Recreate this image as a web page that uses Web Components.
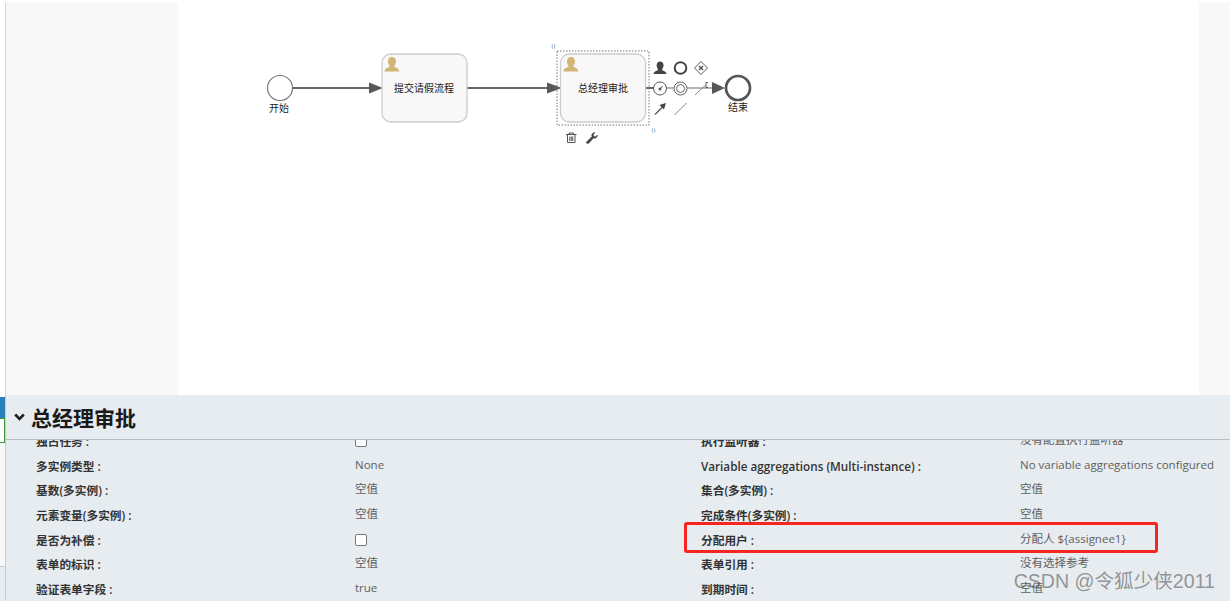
<!DOCTYPE html>
<html>
<head>
<meta charset="utf-8">
<style>
	html, body { margin: 0; height: 100%; background: #fff; overflow: hidden; }
	body { font-family: 'Open Sans', 'Noto Sans CJK SC', sans-serif; }
</style>
</head>
<body>
<modeler-page>
	<bpmn-canvas slot="canvas"></bpmn-canvas>
	<props-panel slot="panel" heading="总经理审批">
		<prop-row slot="left" label="独占任务 :" type="check"></prop-row>
		<prop-row slot="left" label="多实例类型 :" value="None"></prop-row>
		<prop-row slot="left" label="基数(多实例) :" value="空值"></prop-row>
		<prop-row slot="left" label="元素变量(多实例) :" value="空值"></prop-row>
		<prop-row slot="left" label="是否为补偿 :" type="check"></prop-row>
		<prop-row slot="left" label="表单的标识 :" value="空值"></prop-row>
		<prop-row slot="left" label="验证表单字段 :" value="true"></prop-row>
		<prop-row slot="right" label="执行监听器 :" value="没有配置执行监听器"></prop-row>
		<prop-row slot="right" label="Variable aggregations (Multi-instance) :" value="No variable aggregations configured"></prop-row>
		<prop-row slot="right" label="集合(多实例) :" value="空值"></prop-row>
		<prop-row slot="right" label="完成条件(多实例) :" value="空值"></prop-row>
		<prop-row slot="right" label="分配用户 :" value="分配人 ${assignee1}"></prop-row>
		<prop-row slot="right" label="表单引用 :" value="没有选择参考"></prop-row>
		<prop-row slot="right" label="到期时间 :" value="空值"></prop-row>
	</props-panel>
</modeler-page>
<script>
class ModelerPage extends HTMLElement {
	constructor() {
		super()
		this.attachShadow({ mode: 'open' }).innerHTML = `<style>
			:host { display: flex; flex-direction: column; height: 601px; position: relative; overflow: hidden; }
			.top { height: 395px; padding-top: 2px; box-sizing: border-box; display: flex; flex: none; }
			.rail { width: 6px; border-right: 1px solid #d9d9d9; box-sizing: border-box; flex: none; }
			.palette { width: 172px; background: #f8f8f8; flex: none; }
			.work { width: 1021px; flex: none; position: relative; }
			.side { flex: 1; background: #f8f8f8; }
			.bottom { flex: 1; min-height: 0; display: flex; }
			.edge { width: 5px; flex: none; display: flex; flex-direction: column; padding-top: 2px; box-sizing: border-box; }
			.edge i { display: block; box-sizing: border-box; }
			.blue { height: 21px; background: #2b7fb8; }
			.green { height: 25px; border: 1px solid #3a9a3a; border-left: 0; background: #fff; }
			.white { height: 123px; background: #f8f8f8; }
			.grey { flex: 1; border-top: 1px solid #c6cade; background: #e7ecf0; }
			.panel { flex: 1; min-width: 0; border-left: 1px solid #c8ccd0; }
			.mark { position: absolute; right: 15px; bottom: 8px; font: 19.600px/24px 'Liberation Sans', 'Noto Sans CJK SC', sans-serif; color: rgba(90, 90, 90, .62); }
			.box { position: absolute; left: 684px; top: 522px; width: 468px; height: 25px; border: 3px solid #f5261e; border-radius: 3px; }
		</style>
		<div class="top">
			<div class="rail"></div>
			<div class="palette"></div>
			<div class="work"><slot name="canvas"></slot></div>
			<div class="side"></div>
		</div>
		<div class="bottom">
			<div class="edge"><i class="blue"></i><i class="green"></i><i class="white"></i><i class="grey"></i></div>
			<div class="panel"><slot name="panel"></slot></div>
		</div>
		<div class="box"></div>
		<div class="mark">CSDN @令狐少侠2011</div>`
	}
}

class BpmnCanvas extends HTMLElement {
	constructor() {
		super()
		// canvas origin sits at x=178, y=2 of the page
		const user = (x, y, c, s = 1) => `<path transform="translate(${x} ${y}) scale(${s})" fill="${c}" d="M7 0c2.6 0 4 2 4 4.4 0 1.8-.7 3.2-1.6 4.1v1.6c2 .6 4.6 1.4 5 4.4H-.6c.4-3 3-3.8 5-4.4V8.500C3.700 7.600 3 6.200 3 4.400 3 2 4.400 0 7 0z"/>`
		this.attachShadow({ mode: 'open' }).innerHTML = `<style>
			:host { display: block; width: 100%; height: 100%; }
			svg { display: block; }
			text { font-family: 'Noto Sans CJK SC', sans-serif; font-size: 10px; fill: #222; text-anchor: middle; }
		</style>
		<svg width="1021" height="393" viewBox="178 2 1021 393">
			<g fill="none" stroke="#666" stroke-width="2">
				<path d="M293 88H372"/>
				<path d="M467 88H551"/>
				<path d="M646 88H654"/>
				<path d="M654 88H714" stroke="#b4b4b4"/>
			</g>
			<path d="M369 82.500L383 88L369 93.500z" fill="#585858"/>
			<path d="M547 82.500L562 88L547 93.500z" fill="#585858"/>
			<path d="M712 82L725 88L712 94z" fill="#585858"/>

			<circle cx="280" cy="88" r="12.500" fill="#fff" stroke="#777" stroke-width="1.200"/>
			<text x="279" y="112">开始</text>

			<rect x="382" y="54" width="85" height="68" rx="9" fill="#f8f8f8" stroke="#ccc" stroke-width="1.300"/>
			${user(385, 57, '#d1b574')}
			<text x="424" y="92">提交请假流程</text>

			<rect x="557" y="51" width="92" height="74" fill="none" stroke="#777" stroke-width="1" stroke-dasharray="1.500 1.500"/>
			<rect x="560.500" y="54" width="85" height="68" rx="9" fill="#f8f8f8" stroke="#ccc" stroke-width="1.300"/>
			${user(564, 57, '#d1b574')}
			<text x="603" y="92">总经理审批</text>
			<rect x="552" y="45" width="3" height="3" fill="none" stroke="#6f8fc0" stroke-width="1" stroke-dasharray="1 1"/>
			<rect x="652" y="129" width="3" height="3" fill="none" stroke="#6f8fc0" stroke-width="1" stroke-dasharray="1 1"/>

			<circle cx="738" cy="88" r="12" fill="#fff" stroke="#555" stroke-width="2.700"/>
			<text x="738" y="111">结束</text>

			${user(654, 61.500, '#444', .87)}
			<circle cx="680.500" cy="68" r="5.800" fill="none" stroke="#444" stroke-width="2"/>
			<path d="M701 61.500l6.500 6.500-6.500 6.500-6.500-6.500z" fill="#fff" stroke="#555" stroke-width="1"/>
			<path d="M699 66l4 4M703 66l-4 4" stroke="#555" stroke-width="1.500"/>

			<circle cx="660" cy="88.500" r="6.500" fill="#fff" stroke="#555" stroke-width="1"/>
			<circle cx="660" cy="89" r="1.500" fill="#555"/>
			<path d="M660 89l2.800-3" fill="none" stroke="#555" stroke-width="1"/>
			<circle cx="680.500" cy="88.500" r="6.500" fill="#fff" stroke="#666" stroke-width="1"/>
			<circle cx="680.500" cy="88.500" r="4" fill="none" stroke="#666" stroke-width="1"/>
			<path d="M695 95l10-9.500" stroke="#888" stroke-width="1"/>
			<path d="M708 82.500h-2v5h2" fill="none" stroke="#555" stroke-width="1"/>

			<path d="M655 114.500l9-9" stroke="#555" stroke-width="1.200"/>
			<path d="M666 103l-2 6.500-4.500-4.500z" fill="#444"/>
			<path d="M674.500 115l12-12" stroke="#888" stroke-width="1"/>

			<g fill="none" stroke="#555" stroke-width="1">
				<path d="M566 134.500h10.500M569 134.500v-1.500h4.500v1.500"/>
				<path d="M567.500 135v7.500h7.500V135M569.800 136.500v4.500M571.300 136.500v4.500M572.800 136.500v4.500"/>
			</g>
			<path d="M586 142.500l1.500-1.500 4.500-4.500c-.8-2 .6-4 3-3.900l-1.800 1.800.6 1.800 1.800.6 1.800-1.800c.2 2.400-1.800 3.800-3.900 3l-4.700 5.200-1.300.4z" fill="#444" stroke="#444" stroke-width=".5"/>
		</svg>`
	}
}

class PropsPanel extends HTMLElement {
	constructor() {
		super()
		this.attachShadow({ mode: 'open' }).innerHTML = `<style>
			:host { display: block; height: 206px; background: #e7ecf0; overflow: hidden; color: #222; }
			h2 { margin: 0; height: 45px; box-sizing: border-box; border-bottom: 1px solid #b9bec4; display: flex; align-items: center; gap: 6px; padding: 0 0 0 8px; font: 700 21px/44px 'Noto Sans CJK SC', sans-serif; color: #1a1a1a; }
			svg { flex: none; }
			.clip { height: 160px; overflow: hidden; }
			.cols { display: grid; grid-template-columns: 665px 1fr; margin-top: -11px; }
			.col { display: flex; flex-direction: column; }
		</style>
		<h2><svg width="11" height="8" viewBox="0 0 11 8"><path d="M1.200 1.500l4.300 4.300 4.300-4.300" fill="none" stroke="#1f1f1f" stroke-width="2.600"/></svg><span></span></h2>
		<div class="clip"><div class="cols">
			<div class="col"><slot name="left"></slot></div>
			<div class="col"><slot name="right"></slot></div>
		</div></div>`
		this.shadowRoot.querySelector('span').textContent = this.getAttribute('heading')
	}
}

class PropRow extends HTMLElement {
	constructor() {
		super()
		this.attachShadow({ mode: 'open' }).innerHTML = `<style>
			:host { display: flex; height: 24.660px; font-size: 11.500px; padding-left: 30px; line-height: 24.660px; }
			.l { width: 319px; flex: none; font-weight: 600; font-size: 11.700px; color: #333; white-space: nowrap; box-sizing: border-box; }
			.v { color: #5f5f5f; white-space: nowrap; position: relative; top: -1px; }
			.c { width: 10px; height: 10px; border: 1px solid #767676; border-radius: 2px; background: #fff; margin-top: 6px; }
		</style><div class="l"></div>`
		const root = this.shadowRoot
		root.querySelector('.l').textContent = this.getAttribute('label')
		if (this.getAttribute('type') === 'check') {
			const c = document.createElement('div')
			c.className = 'c'
			root.appendChild(c)
		} else {
			const v = document.createElement('div')
			v.className = 'v'
			v.textContent = this.getAttribute('value')
			root.appendChild(v)
		}
	}
}

customElements.define('prop-row', PropRow)
customElements.define('props-panel', PropsPanel)
customElements.define('bpmn-canvas', BpmnCanvas)
customElements.define('modeler-page', ModelerPage)
</script>
</body>
</html>
